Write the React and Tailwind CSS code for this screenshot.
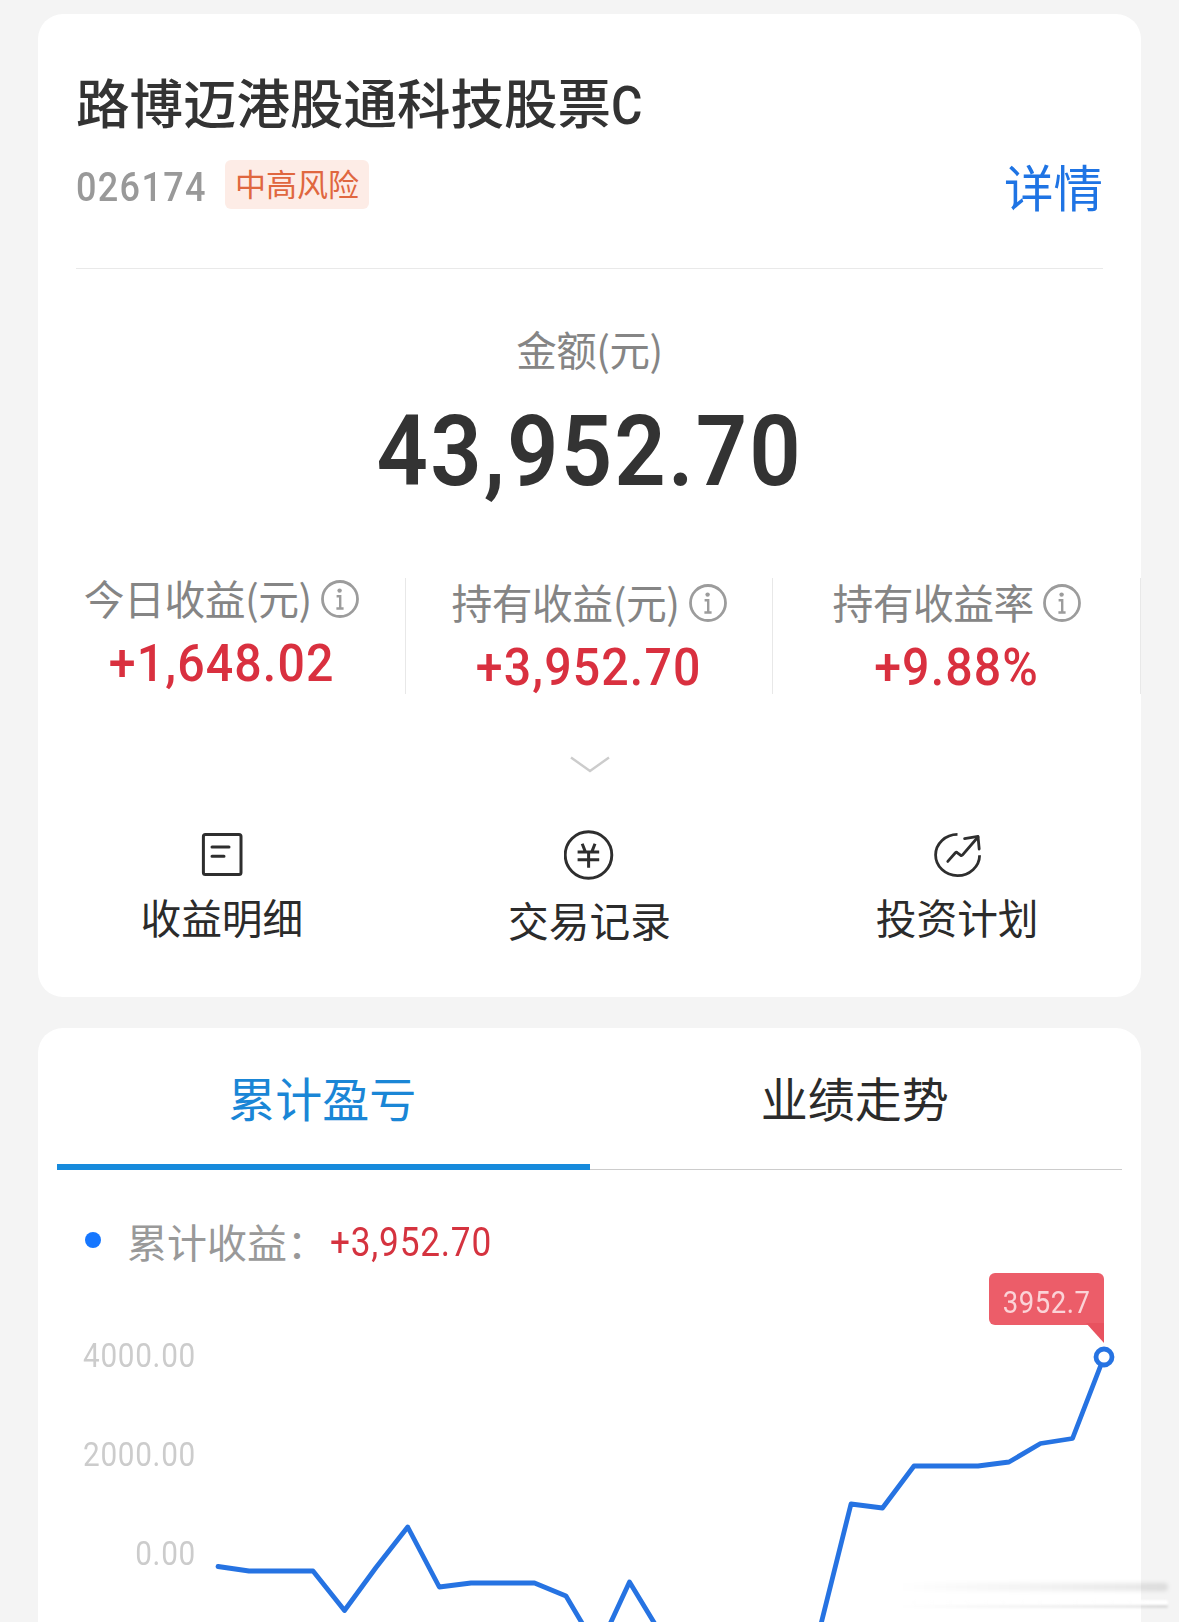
import React from 'react';
import clsx from 'clsx';

const CJK = "font-['Noto_Sans_CJK_SC',sans-serif]";
const NUM = "font-['Roboto','Noto_Sans_CJK_SC',sans-serif] whitespace-nowrap";

const stats = [
  { label: '今日收益(元)', value: '+1,648.02', offset: 'pt-[1px]' },
  { label: '持有收益(元)', value: '+3,952.70', offset: 'pt-[5px]' },
  { label: '持有收益率', value: '+9.88%', offset: 'pt-[5px]' },
];

const actions = [
  { label: '收益明细', icon: StatementIcon, gap: 'mt-[17px]' },
  { label: '交易记录', icon: YuanIcon, gap: 'mt-5' },
  { label: '投资计划', icon: PlanIcon, gap: 'mt-[17px]' },
];

const axis = ['4000.00', '2000.00', '0.00'];

const points = [
  [218, 1566.5], [249, 1571], [313, 1571], [344.5, 1610.5], [376, 1567.5], [407.7, 1527],
  [439.3, 1587], [471, 1583], [534.5, 1583], [566, 1596], [598, 1650], [629.5, 1582],
  [661, 1634], [693, 1680], [806, 1684], [851, 1504], [882.5, 1508], [914, 1466], [978, 1466],
  [1009, 1462], [1040.5, 1443.5], [1072.5, 1438.5], [1104, 1357],
];

function InfoIcon() {
  return (
    <svg className="w-[38px] h-[38px] shrink-0" viewBox="0 0 38 38" fill="none" stroke="#9c9c9c">
      <circle cx="19" cy="19" r="17.5" strokeWidth="2.8" />
      <circle cx="18.6" cy="10.6" r="2.2" fill="#9c9c9c" stroke="none" />
      <path d="M15.6 16.3h3.6v12M15.4 28.5h7.2" strokeWidth="2.4" />
    </svg>
  );
}

function StatementIcon() {
  return (
    <svg className="w-[50px] h-[50px]" viewBox="0 0 50 50" fill="none" stroke="#2e2e2e" strokeWidth="3">
      <rect x="6.4" y="4.5" width="37.6" height="40" rx="2" />
      <path d="M15 17h17M15 26.2h12" strokeLinecap="round" />
    </svg>
  );
}

function YuanIcon() {
  return (
    <svg className="w-[50px] h-[50px]" viewBox="0 0 50 50" fill="none" stroke="#2e2e2e">
      <circle cx="24.5" cy="25" r="23.3" strokeWidth="2.9" />
      <path d="M18.2 13.8l3 7.6M31 13.8l-3 7.6M13.6 22h21.6M13.6 29.8h21.6M24.6 22v15.8" strokeWidth="3" />
    </svg>
  );
}

function PlanIcon() {
  return (
    <svg
      className="w-[50px] h-[50px]"
      viewBox="0 0 50 50"
      fill="none"
      stroke="#2e2e2e"
      strokeWidth="2.8"
      strokeLinecap="round"
      strokeLinejoin="round"
    >
      <path d="M25.5 4.4A22 20.6 0 1 0 47.6 25.2" strokeLinecap="butt" />
      <path d="M15.8 31.4l7.6-8.6c.6-.6 1.4-.6 2 0l3.1 2.4c.8.5 1.5.4 2.1-.3L46 7" />
      <path d="M32.6 8.6L46 6.4l1.2 12.6" />
    </svg>
  );
}

function SummaryCard() {
  return (
    <section className="h-[983px] bg-white rounded-[25px]">
      <div className="mx-[38px] pt-[62px] h-[255px] border-b border-[#e9e9e9]">
        <h1 className={clsx(NUM, 'h-14 leading-[60px] text-[53.5px] font-medium text-[#333]')}>
          路博迈港股通科技股票<span className="inline-block origin-left scale-x-[0.9]">C</span>
        </h1>
        <div className="mt-7 h-[49px] flex items-center">
          <span
            className={clsx(
              NUM,
              'w-[149px] pt-[7px] text-[40px] leading-none font-medium tracking-[1.5px] origin-left scale-x-90 text-[#999]'
            )}
          >
            026174
          </span>
          <span
            className={clsx(
              CJK,
              'w-36 h-[49px] rounded-md bg-[#fdece6] text-center text-[31px] leading-[46px] text-[#e0673f]'
            )}
          >
            中高风险
          </span>
          <span className={clsx(CJK, 'ml-auto pt-[3px] text-[49.5px] leading-none text-[#1f74e4]')}>详情</span>
        </div>
      </div>

      <div className="pt-[60px] flex flex-col items-center">
        <span className={clsx(CJK, 'h-10 text-[40.5px] leading-10 tracking-[-0.5px] text-[#858585]')}>金额(元)</span>
        <span
          className={clsx(
            NUM,
            'mt-[34px] text-[98px] leading-[98px] font-semibold tracking-[2.3px] scale-x-[0.92] text-[#333]'
          )}
        >
          43,952.70
        </span>
      </div>

      <div className="mt-[74px] h-[119px] grid grid-cols-3">
        {stats.map((s) => (
          <div key={s.label} className="flex">
            <div className={clsx('flex-1 flex flex-col items-center', s.offset)}>
              <div className="h-[41px] flex items-center gap-[9px]">
                <span className={clsx(CJK, 'pt-px text-[40.8px] leading-[41px] tracking-[-0.5px] text-[#858585] whitespace-nowrap')}>
                  {s.label}
                </span>
                <span className="pt-1"><InfoIcon /></span>
              </div>
              <span
                className={clsx(
                  NUM,
                  'mt-5 text-[52.5px] leading-[52px] font-medium tracking-[1.2px] scale-x-[0.92] text-[#d9303f]'
                )}
              >
                {s.value}
              </span>
            </div>
            <div className="w-px mt-[3px] bg-[#e8e8e8]" />
          </div>
        ))}
      </div>

      <svg className="block mx-auto mt-[62px] w-10 h-[17px]" viewBox="0 0 40 17" fill="none" stroke="#ccc" strokeWidth="2.4">
        <path d="M1 1.5l19 13.5 19-13.5" />
      </svg>

      <div className="mt-[57px] grid grid-cols-3">
        {actions.map(({ label, icon: Icon, gap }) => (
          <div key={label} className="flex flex-col items-center">
            <Icon />
            <span className={clsx(CJK, gap, 'text-[40.7px] leading-10 text-[#2b2b2b]')}>{label}</span>
          </div>
        ))}
      </div>
    </section>
  );
}

function ProfitChart() {
  return (
    <div className="relative h-[362px]">
      <svg
        className="absolute inset-0 w-full h-full overflow-visible"
        viewBox="38 1260 1103 362"
        fill="none"
        stroke="#2673e2"
      >
        <polyline points={points.map((p) => p.join(',')).join(' ')} strokeWidth="4.8" strokeLinecap="round" strokeLinejoin="round" />
        <circle cx="1104" cy="1357" r="8" fill="#fff" strokeWidth="4.8" />
      </svg>
      <div
        className={clsx(
          NUM,
          'pt-[79px] w-[158px] flex flex-col items-end text-[33px] leading-[33px] tracking-[0.8px] origin-right scale-x-90 text-[#ccc]'
        )}
      >
        {axis.map((v) => (
          <span key={v} className="mb-[66px]">{v}</span>
        ))}
      </div>
      {/* value of the last day */}
      <div
        className={clsx(
          NUM,
          'absolute right-[37px] top-[13px] w-[115px] h-[52px] rounded-md rounded-br-none bg-[#ec5d69] text-center text-[30.5px] leading-[59px] text-[#fbd3d7]'
        )}
      >
        <span className="inline-block tracking-[0.6px] scale-x-90">3952.7</span>
        <svg className="absolute right-0 top-[50px] w-[18px] h-5" viewBox="0 0 18 20">
          <path d="M0 0h18v20z" fill="#e8525f" />
        </svg>
      </div>
    </div>
  );
}

function TrendCard() {
  return (
    <section className="mt-[31px] h-[594px] bg-white rounded-t-[25px]">
      <div className={clsx(CJK, 'mx-[19px] h-[142px] grid grid-cols-2 text-center text-[47px] leading-[48px]')}>
        <div className="pt-[45px] pr-[2px] border-b-[6px] border-[#168adc] text-[#1a86d6]">累计盈亏</div>
        <div className="pt-[45px] pr-[2px] border-b border-[#ccc] text-[#2b2b2b]">业绩走势</div>
      </div>
      <div className="mt-[49px] h-[41px] flex items-center">
        <span className="ml-[47px] w-4 h-4 rounded-full bg-[#1677ff]" />
        <span className={clsx(CJK, 'ml-[26px] pt-[3px] text-[40px] leading-10 text-[#999]')}>累计收益：</span>
        <span
          className={clsx(
            NUM,
            'pt-[7px] ml-[3px] text-[40px] leading-10 tracking-[0.9px] origin-left scale-x-[0.88] text-[#d5333f]'
          )}
        >
          +3,952.70
        </span>
      </div>
      <ProfitChart />
    </section>
  );
}

export default function App() {
  return (
    <main className="relative w-[1179px] h-[1622px] overflow-hidden bg-[#f4f4f4] pt-[14px] pl-[38px] pr-[38px]">
      <SummaryCard />
      <TrendCard />
      {/* faint streaks over the bottom right corner */}
      <div className="absolute right-[11px] top-[1583px] w-[270px] h-2 rounded-full bg-linear-to-r from-transparent to-black/10 blur-[2px]" />
      <div className="absolute right-[11px] top-[1600px] w-[270px] h-[5px] rounded-full bg-linear-to-r from-transparent to-white blur-[1px]" />
      <div className="absolute right-[11px] top-[1605px] w-[270px] h-[3px] rounded-full bg-linear-to-r from-transparent to-black/10 blur-[1px]" />
    </main>
  );
}
